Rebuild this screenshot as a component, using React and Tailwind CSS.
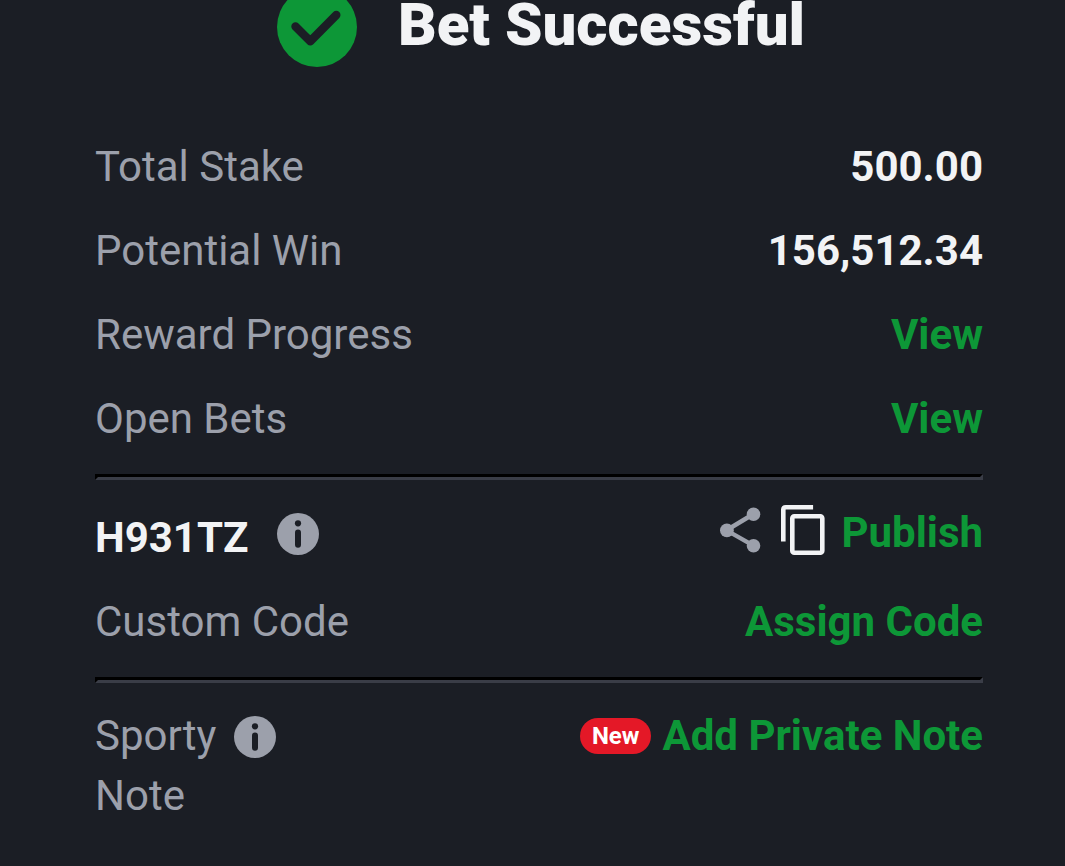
const label = 'text-[#9ca0ab]';
const action = 'font-bold text-[#0d9737] cursor-pointer whitespace-nowrap';

function Row({ name, children }) {
  return (
    <div className="flex h-[84px] items-center justify-between">
      <span className={label}>{name}</span>
      {children}
    </div>
  );
}

function Divider() {
  return (
    <hr className="mt-[13px] h-0 border-[3px] border-t-black border-r-[#3a3d47] border-b-[#3a3d47] border-l-black" />
  );
}

function InfoButton({ name }) {
  return (
    <button type="button" aria-label={name} className="block size-[42px] shrink-0 cursor-pointer">
      <svg viewBox="0 0 42 42" className="size-full">
        <circle cx="21" cy="21" r="21" fill="#9ca0ab" />
        <circle cx="21" cy="10.3" r="3.1" fill="#1b1e25" />
        <path d="M21 19.5v12.3" stroke="#1b1e25" strokeWidth="6" strokeLinecap="round" />
      </svg>
    </button>
  );
}

export default function App() {
  return (
    <main className="min-h-screen bg-[#1b1e25] pr-[82px] pb-8 pl-[95px] font-['Roboto','Liberation_Sans',sans-serif] text-[42px] leading-[60px] text-[#f2f3f5]">
      <header className="flex h-[125px] items-start justify-center gap-[41px] pl-1">
        <svg viewBox="0 0 80 80" className="-mt-[13px] size-20 shrink-0" aria-hidden="true">
          <circle cx="40" cy="40" r="40" fill="#0d9737" />
          <path d="M18.5 39.5l14.8 14.8 26-26.3" fill="none" stroke="#1b1e25" strokeWidth="8.4" strokeLinecap="round" strokeLinejoin="round" />
        </svg>
        <h1 className="text-[60px] font-black leading-[50px]">Bet Successful</h1>
      </header>

      <Row name="Total Stake">
        <span className="font-bold">500.00</span>
      </Row>
      <Row name="Potential Win">
        <span className="font-bold">156,512.34</span>
      </Row>
      <Row name="Reward Progress">
        <button type="button" className={action}>View</button>
      </Row>
      <Row name="Open Bets">
        <button type="button" className={action}>View</button>
      </Row>

      <Divider />

      <div className="flex h-[100px] items-start justify-between">
        <div className="flex items-start gap-[29px] pt-7">
          <span className="font-bold">H931TZ</span>
          <div className="pt-[5px]">
            <InfoButton name="About booking code" />
          </div>
        </div>
        <div className="flex items-start gap-4 pt-[23px]">
          <button type="button" aria-label="Share" className="flex h-[54px] cursor-pointer items-center">
            <svg viewBox="0 0 45 46" className="h-[46px] w-[45px]">
              <path d="M33.5 7L6.5 23.3l27 15.4" fill="none" stroke="#9ca0ab" strokeWidth="4.4" />
              <g fill="#9ca0ab">
                <circle cx="33.5" cy="7.2" r="6.8" />
                <circle cx="6.9" cy="23.3" r="6.9" />
                <circle cx="33.5" cy="38.7" r="6.8" />
              </g>
            </svg>
          </button>
          <button type="button" aria-label="Copy" className="flex h-[54px] cursor-pointer items-center">
            <svg viewBox="0 0 44 50" className="h-[50px] w-[44px]" fill="none" stroke="#f2f3f5" strokeWidth="4.6">
              <path d="M2.3 36.5V4.8q0-2.5 2.5-2.5h27.3" />
              <rect x="11.3" y="11.3" width="30" height="36.4" rx="2" />
            </svg>
          </button>
          <button type="button" className={action}>Publish</button>
        </div>
      </div>

      <Row name="Custom Code">
        <button type="button" className={action}>Assign Code</button>
      </Row>

      <Divider />

      <div className="flex items-start justify-between pt-[23px]">
        <div className="flex items-start gap-[18px]">
          <span className={label}>Sporty<br />Note</span>
          <div className="flex h-[62px] items-center">
            <InfoButton name="About Sporty Note" />
          </div>
        </div>
        <div className="flex items-center gap-[11px]">
          <span className="flex h-9 items-center rounded-full bg-[#e41827] px-3 text-2xl font-bold text-white">New</span>
          <button type="button" className={action}>Add Private Note</button>
        </div>
      </div>
    </main>
  );
}
